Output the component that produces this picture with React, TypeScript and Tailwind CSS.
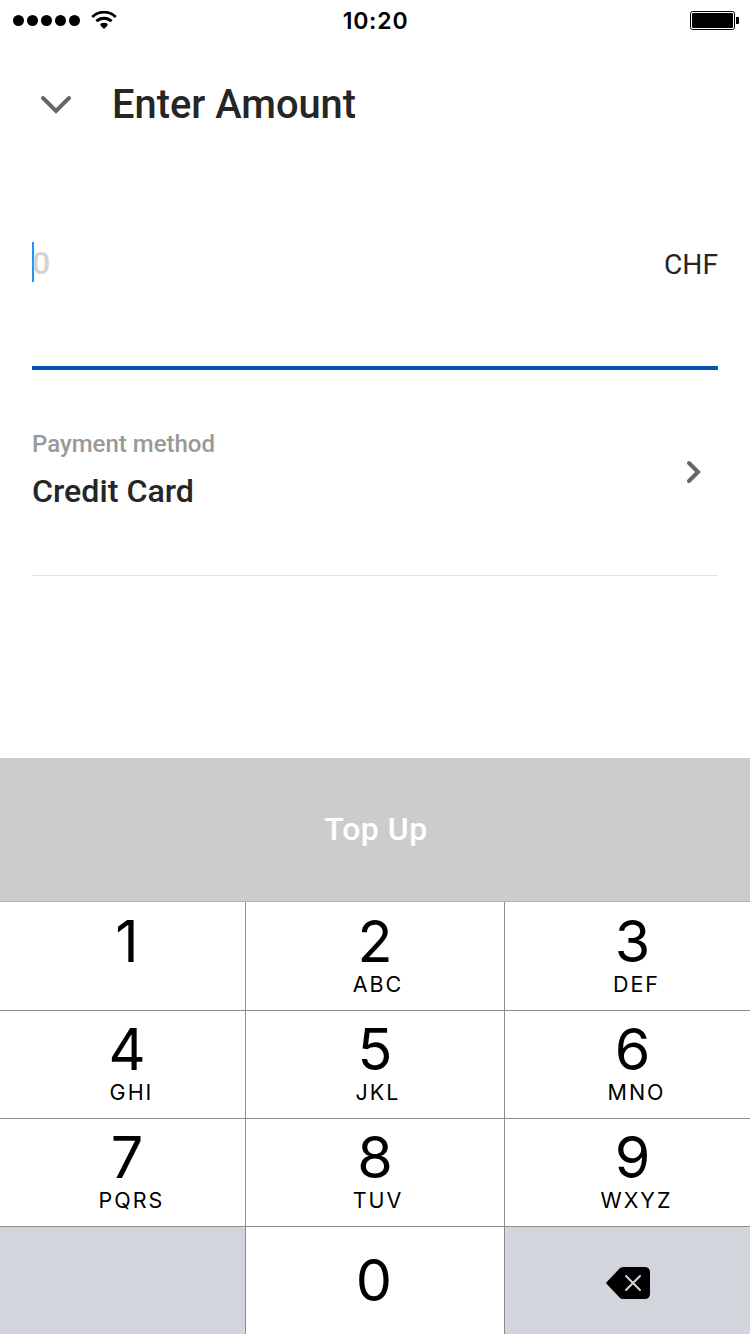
const columns = [
  { digit: "translate-x-[4.5px]", letters: "translate-x-[9px]" },
  { digit: "translate-x-0", letters: "translate-x-[3px]" },
  { digit: "translate-x-[5px]", letters: "translate-x-[9px]" },
];

const keys = [
  ["1", ""], ["2", "ABC"], ["3", "DEF"],
  ["4", "GHI"], ["5", "JKL"], ["6", "MNO"],
  ["7", "PQRS"], ["8", "TUV"], ["9", "WXYZ"],
];

function StatusBar() {
  return (
    <div className="grid h-10 grid-cols-3 items-center pl-[13px] pr-[11px] font-['Inter',sans-serif]">
      <div className="flex items-center gap-[3px]">
        {[0, 1, 2, 3, 4].map((i) => (
          <span key={i} className="size-[11px] rounded-full bg-black" />
        ))}
        <svg className="ml-2" width="26" height="18" viewBox="0 0 26 18">
          <path d="M13 18 9.300 14.200q0-2.400 3.700-2.400t3.700 2.400z" />
          <path d="M1.200 6a16.800 16.800 0 0 1 23.600 0M5.400 10.300a10.900 10.900 0 0 1 15.200 0" fill="none" stroke="#000" strokeWidth="2.900" />
        </svg>
      </div>
      <div className="pt-0.5 pr-px text-center text-[23px] leading-[38px] font-semibold tracking-[0.8px] text-black">10:20</div>
      <svg className="justify-self-end" width="49" height="19" viewBox="0 0 49 19">
        <rect x=".5" y=".5" width="44" height="18" rx="2" fill="none" stroke="#000" />
        <rect x="2" y="2" width="41" height="15" rx="1" />
        <path d="M46 6h2q1 0 1 1v5q0 1-1 1h-2z" />
      </svg>
    </div>
  );
}

export default function App() {
  return (
    <main className="flex h-[1334px] w-[750px] flex-col overflow-hidden bg-white font-['Roboto',sans-serif] text-[#262626]">
      <StatusBar />
      <header className="flex h-[128px] items-center pt-0.5 pl-10">
        <svg width="32" height="20" viewBox="0 0 32 20" fill="none" stroke="#666" strokeWidth="4" strokeLinecap="round">
          <path d="m3 3 13 13L29 3" />
        </svg>
        <h1 className="ml-10 text-[39.800px] leading-none font-medium">Enter Amount</h1>
      </header>
      <div className="mx-8 flex h-[202px] items-start justify-between border-b-4 border-[#0057b8] pt-[74px]">
        <div className="flex h-10 items-center border-l-2 border-[#2196f3] text-[#d3d3d3]">
          <span className="-ml-0.5 pt-0.5 text-[32px] leading-10 font-medium">0</span>
        </div>
        <span className="mt-[3px] text-[28.200px] leading-10">CHF</span>
      </div>
      <section className="mx-8 flex h-[206px] items-center justify-between border-b border-[#e4e4e4] pb-px">
        <div className="pb-1">
          <p className="text-2xl leading-7 font-medium text-[#999]">Payment method</p>
          <p className="mt-[13px] text-[32.200px] leading-10 font-medium">Credit Card</p>
        </div>
        <svg className="mr-[15px]" width="17" height="24" viewBox="0 0 17 24" fill="none" stroke="#666" strokeWidth="4" strokeLinecap="round">
          <path d="m3 3 9 9L3 21" />
        </svg>
      </section>
      <button className="mt-auto h-36 shrink-0 border-b border-[#b2b2b2] bg-[#ccc] pb-0.5 pl-0.5 text-[32px] font-medium tracking-[.5px] text-white">Top Up</button>
      <div className="grid shrink-0 grid-cols-[245px_258px_245px] grid-rows-[108px_107px_107px_107px] gap-px bg-[#8c8c8c] font-['Inter',sans-serif] text-black">
        {keys.map(([n, letters], i) => (
          <button key={n} className={`flex flex-col items-center bg-white ${i < 3 ? "pt-[9px]" : "pt-2"}`}>
            <span className={`text-[57.500px] leading-[60px] ${columns[i % 3].digit}`}>{n}</span>
            {letters && (
              <span className={`-mt-px text-[21.500px] leading-7 tracking-[2px] ${columns[i % 3].letters}`}>{letters}</span>
            )}
          </button>
        ))}
        <div className="bg-[#d2d5db]" />
        <button className="bg-white pr-0.5 text-[57.500px] leading-none">0</button>
        <button aria-label="Delete" className="flex items-center justify-center bg-[#d2d5db] pt-1 pl-px">
          <svg width="44" height="32" viewBox="0 0 44 32">
            <path d="M.5 15.300 13.500 1.600Q15 0 17.200 0H38.500q5.500 0 5.500 5.500v21q0 5.500-5.500 5.500H17.200q-2.200 0-3.700-1.600L.5 16.700q-.6-.7 0-1.400z" />
            <path d="m20 9 14 14m0-14L20 23" stroke="#d2d5db" strokeWidth="2" strokeLinecap="round" />
          </svg>
        </button>
      </div>
    </main>
  );
}
